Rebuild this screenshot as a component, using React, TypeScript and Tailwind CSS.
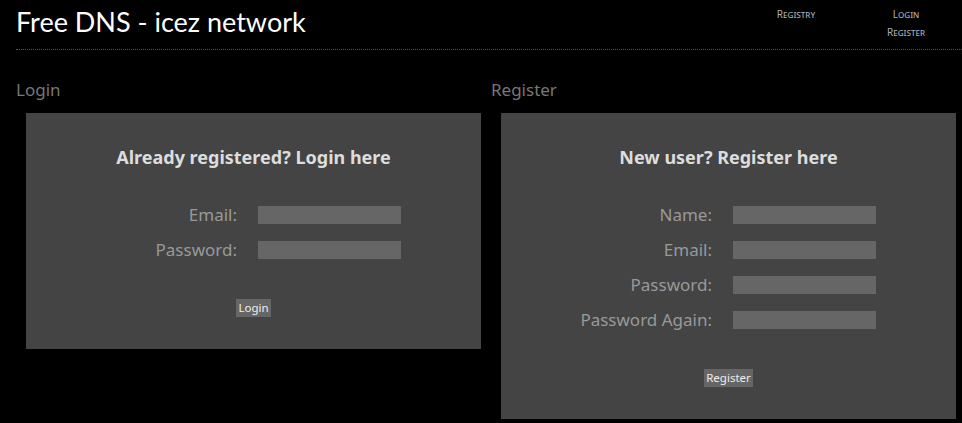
import type { ReactNode } from "react"

const FONT = { fontFamily: '"Noto Sans", "DejaVu Sans", sans-serif' }

// One labelled input row
function Field({ label }: { label: string }) {
  return (
    <>
      <div className="text-right text-[17px] leading-[35px] text-[#999]">{label}</div>
      <div className="flex h-[35px] items-center">
        <div className="h-[18px] w-[143px] bg-[#666]" />
      </div>
    </>
  )
}

function Panel({ title, children, button }: { title: string; children: ReactNode; button: string }) {
  return (
    <div className="ml-[10px] w-[455px] bg-[#444] pt-[33px] pb-[32px]">
      <h2 className="text-center text-[18px] font-bold leading-[22px] text-[#ddd]">{title}</h2>
      <div className="mt-[29px] grid grid-cols-[211px_143px] gap-x-[21px]">{children}</div>
      <div className="mt-[32px] flex justify-center">
        <button className="h-[18px] bg-[#666] px-[2px] text-[11.5px] leading-[18px] text-[#eee]">{button}</button>
      </div>
    </div>
  )
}

export default function App() {
  return (
    <div className="min-h-screen overflow-hidden bg-black pl-4" style={FONT}>
      {/* Header */}
      <div className="flex h-[50px] items-start justify-between border-b border-dotted border-[#555]">
        <h1 className="pt-[2px] text-[27px] leading-[40px] text-white" style={{ fontFamily: "Lato, sans-serif" }}>
          Free DNS - icez network
        </h1>
        <div className="flex gap-[30px] pr-4 pt-[5px] text-[10px] leading-[18px] text-[#a9adb8] [font-variant:small-caps]">
          <div className="w-[80px] text-center">Registry</div>
          <div className="flex w-[80px] flex-col items-center">
            <span>Login</span>
            <span>Register</span>
          </div>
        </div>
      </div>

      {/* Content */}
      <div className="flex">
        <div className="w-[475px] shrink-0">
          <h3 className="pt-[28px] pb-[11px] text-[17px] leading-[24px] text-[#777]">Login</h3>
          <Panel title="Already registered? Login here" button="Login">
            <Field label="Email:" />
            <Field label="Password:" />
          </Panel>
        </div>
        <div className="w-[475px] shrink-0">
          <h3 className="pt-[28px] pb-[11px] text-[17px] leading-[24px] text-[#777]">Register</h3>
          <Panel title="New user? Register here" button="Register">
            <Field label="Name:" />
            <Field label="Email:" />
            <Field label="Password:" />
            <Field label="Password Again:" />
          </Panel>
        </div>
      </div>
    </div>
  )
}
